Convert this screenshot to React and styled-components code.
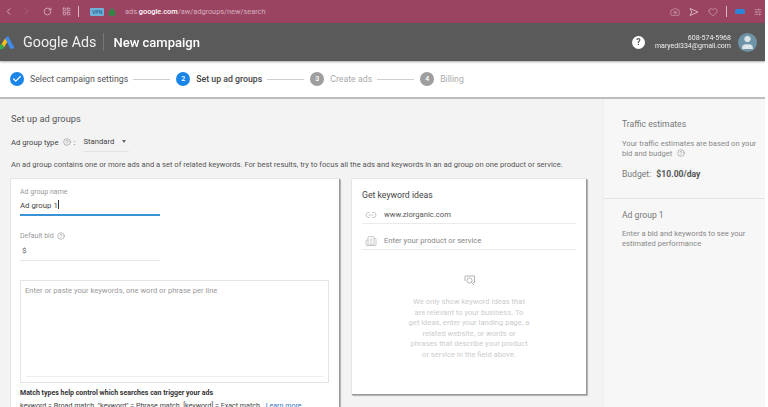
import React from 'react';
import styled, { createGlobalStyle } from 'styled-components';
import { Camera, Heart, RotateCw, ChevronLeft, ChevronRight, LayoutGrid, Lock, Link2, Building2, CircleHelp, Check, User, SlidersHorizontal } from 'lucide-react';

const Global = createGlobalStyle`
  html, body { margin: 0; padding: 0; background: #fff; overflow: hidden; }
  body { font-family: Roboto, "Liberation Sans", sans-serif; }
`;
const Page = styled.div`width: 765px; height: 407px; overflow: hidden; display: flex; flex-direction: column; filter: blur(0.45px);`;
const BrowserBar = styled.div`height: 23px; flex: none; background: #9a4462; display: flex; align-items: center; padding: 0 3px 0 3px; color: #dcbcc8;`;
const NavIcons = styled.div`display: flex; align-items: center; gap: 7px; width: 84px;`;
const Sep = styled.span`width: 1px; height: 11px; background: #d9b8c4; margin: ${p => p.$m || '0 11px 0 0'};`;
const Vpn = styled.span`font: 700 5px "Liberation Sans", sans-serif; background: #6fb2d8; color: #2c6c9a; padding: 1px 2px; border-radius: 1px; width: 10px; text-align: center;`;
const Url = styled.span`font-size: 7.4px; margin-left: 9px; color: #d5aebd; letter-spacing: -0.03px;`;
const UrlStrong = styled.b`color: #fff; font-weight: 500;`;
const BarRight = styled.div`margin-left: auto; display: flex; align-items: center; gap: 9px;`;
const Pill = styled.span`width: 10px; height: 5px; background: #2a86d8; border-radius: 2px;`;
const SendGlyph = styled.svg`width: 10px; height: 10px; fill: none; stroke: currentColor; stroke-width: 0.9; stroke-linejoin: round;`;
const Header = styled.div`height: 38px; flex: none; background: #5a5a5a; display: flex; align-items: center; color: #fff; box-shadow: 0 1px 2px rgba(0,0,0,.35); position: relative; z-index: 2; overflow: hidden;`;
const Logo = styled.svg`width: 16px; height: 15px; margin-left: -1px; flex: none;`;
const Brand = styled.span`font-size: 14.3px; color: #eee; margin-left: 8px;`;
const HeadSep = styled.span`width: 1px; height: 18px; background: #777; margin: 0 9px 0 7px;`;
const Title = styled.span`font-size: 13px; font-weight: 500;`;
const HeaderRight = styled.div`margin-left: auto; display: flex; align-items: center; padding-right: 8px;`;
const Account = styled.div`font-size: 7px; line-height: 8.5px; text-align: right; margin: 0 7px 0 10px; color: #eee;`;
const HelpDot = styled.span`width: 13px; height: 13px; background: #fff; border-radius: 50%; color: #555; font: 700 9px/13px Roboto, sans-serif; text-align: center;`;
const Avatar = styled.span`width: 19px; height: 19px; border-radius: 50%; background: #6e93a6; display: flex; align-items: center; justify-content: center; color: #dfe6ea; overflow: hidden;`;
const Stepper = styled.div`height: 36px; flex: none; background: #fff; display: flex; align-items: center; padding: 0 0 0 10px; border-bottom: 2px solid #bdbdbd;`;
const StepDot = styled.span`width: 14px; height: 14px; border-radius: 50%; flex: none; background: ${p => p.$on ? '#1a85e8' : '#9e9e9e'}; color: #fff; font: 500 7px/14px Roboto, sans-serif; text-align: center; display: flex; align-items: center; justify-content: center;`;
const StepLabel = styled.span`font-size: 8.75px; margin-left: 6px; white-space: nowrap; color: ${p => p.$c || '#555'}; font-weight: ${p => p.$b ? 500 : 400};`;
const StepLine = styled.span`height: 1px; width: ${p => p.$w}px; background: #cfcfcf; margin: 0 6px 0 5px;`;
const Body = styled.div`flex: 1; display: flex; background: #f3f3f3; min-height: 0;`;
const Main = styled.div`width: 603px; flex: none; padding: 14px 0 0 11px; box-sizing: border-box;`;
const H1 = styled.div`font-size: 9.3px; color: #555; line-height: 12px;`;
const TypeRow = styled.div`display: flex; align-items: center; font-size: 7.7px; color: #444; margin-top: 7px; height: 20px;`;
const HelpIcon = styled(CircleHelp)`color: #777; margin: ${p => p.$m || '0 0 0 4px'};`;
const Select = styled.span`margin-left: 8px; border-bottom: 1px solid #e3e3e3; display: flex; align-items: center; gap: 8px; width: 46px; height: 20px; line-height: 20px; box-sizing: border-box;`;
const Caret = styled.span`width: 0; height: 0; border: 2.5px solid transparent; border-top: 3px solid #666; border-bottom: 0;`;
const Intro = styled.div`font-size: 7.6px; color: #555; margin-top: 8px; line-height: 10px; white-space: nowrap;`;
const Cols = styled.div`display: flex; align-items: flex-start; margin-top: 9px;`;
const Card = styled.div`background: #fff; border-right: 1px solid #999; border-bottom: 1px solid #999; box-shadow: 0 0 1px rgba(0,0,0,.35), 1px 1px 1px rgba(0,0,0,.2); box-sizing: border-box;`;
const LeftCard = styled(Card)`width: 329px; height: 240px; padding: 8px 9px; margin: 0 12px 0 0;`;
const RightCard = styled(Card)`width: 235px; height: 216px; padding: 11px 10px 9px;`;
const FieldLabel = styled.div`font-size: 7px; color: #999; line-height: 10px; display: flex; align-items: center; margin-top: ${p => p.$mt || 0}px;`;
const NameInput = styled.div`width: 140px; height: 13px; margin-top: 2px; font-size: 7.8px; line-height: 13px; color: #444; border-bottom: 2px solid #3a93d6; padding-bottom: 2px;`;
const Cursor = styled.span`display: inline-block; width: 1px; height: 9px; background: #333; vertical-align: -1px;`;
const BidInput = styled.div`width: 138px; margin-top: 4px; font-size: 8px; line-height: 12px; color: #666; border-bottom: 1px solid #e6e6e6; padding: 0 0 3px 2px;`;
const Keywords = styled.div`height: 103px; margin-top: 19px; border: 1px solid #e4e4e4; box-sizing: border-box; padding: 5px 4px; font-size: 7.6px; color: #9a9a9a; line-height: 10px; position: relative; width: 309px;`;
const KwLine = styled.span`position: absolute; left: 5px; right: 5px; bottom: 5px; height: 1px; background: #eee;`;
const MatchTitle = styled.div`font-size: 7px; font-weight: 700; color: #333; margin-top: 5px; line-height: 10px;`;
const MatchText = styled.div`font-size: 7.1px; color: #444; margin-top: 3px; line-height: 10px; white-space: nowrap;`;
const LearnMore = styled.span`color: #3b78c4; margin-left: 4px;`;
const RightTitle = styled.div`font-size: 8.7px; color: #444; line-height: 11px;`;
const IdeaRow = styled.div`display: flex; align-items: flex-end; height: ${p => p.$h}px; padding-bottom: 3px; border-bottom: 1px solid #eaeaea; font-size: 7.65px; line-height: 10px; color: ${p => p.$c}; gap: 6px; box-sizing: border-box;`;
const IdeaIcon = styled.span`width: 14px; height: 12px; margin-left: 2px; color: #aaa; display: flex; justify-content: center; align-items: center; margin-bottom: -1px;`;
const Empty = styled.div`display: flex; flex-direction: column; align-items: center; margin-top: 24px; color: #ccc; text-align: center; font-size: 7.6px; line-height: 10.6px;`;
const EmptyIcon = styled.svg`width: 13px; height: 12px; fill: none; stroke: #aaa; stroke-width: 0.9;`;
const EmptyText = styled.div`margin-top: 11px; white-space: nowrap;`;
const Side = styled.div`flex: 1; background: #f7f7f7; border-left: 1px solid #ededed;`;
const SideSection = styled.div`padding: ${p => p.$p}; border-bottom: ${p => p.$b ? '1px solid #e4e4e4' : 0};`;
const SideTitle = styled.div`font-size: 8.6px; color: #777; line-height: 11px;`;
const SideText = styled.div`font-size: 7.6px; color: #888; line-height: 10.4px; margin-top: ${p => p.$mt}px;`;
const Budget = styled.div`font-size: 8.6px; color: #777; margin-top: 9px; line-height: 11px;`;
const BudgetValue = styled.b`color: #555; font-weight: 700; margin-left: 3px;`;

const Q = ({ s = 8, m }) => <HelpIcon size={s} strokeWidth={1.4} $m={m} />;

export default function App() {
  return (
    <Page>
      <Global />
      <BrowserBar>
        <NavIcons>
          <ChevronLeft size={11} strokeWidth={1.6} color="#e6ccd6" />
          <ChevronRight size={11} strokeWidth={1.4} color="#b47c92" />
          <RotateCw size={9} strokeWidth={1.8} color="#e6ccd6" style={{ marginLeft: 4 }} />
          <LayoutGrid size={9} strokeWidth={1.6} color="#e6ccd6" style={{ marginLeft: 3 }} />
        </NavIcons>
        <Sep $m="0 11px 0 -9px" />
        <Vpn>VPN</Vpn>
        <Lock size={8} color="#2f8a45" fill="#2f8a45" style={{ marginLeft: 4 }} />
        <Url>ads.<UrlStrong>google.com</UrlStrong>/aw/adgroups/new/search</Url>
        <BarRight>
          <Camera size={10} strokeWidth={1.3} />
          <SendGlyph viewBox="0 0 10 10"><path d="M1 1.5 L9 5 L1 8.5 L2.8 5Z" /></SendGlyph>
          <Heart size={10} strokeWidth={1.3} />
          <Sep $m="0 -1px" />
          <Pill />
          <SlidersHorizontal size={8} strokeWidth={1.6} />
        </BarRight>
      </BrowserBar>
      <Header>
        <Logo viewBox="0 0 16 15">
          <path d="M9 1 L15.5 13 L11.5 14 L6 3.5Z" fill="#3f8cf0" />
          <path d="M6 3.5 L2 10 L5 12.5 L8.2 7Z" fill="#f4bf1d" />
          <circle cx="2.5" cy="12" r="2.4" fill="#34a853" />
        </Logo>
        <Brand>Google Ads</Brand>
        <HeadSep />
        <Title>New campaign</Title>
        <HeaderRight>
          <HelpDot>?</HelpDot>
          <Account>608-574-5968<br />maryedi334@gmail.com</Account>
          <Avatar><User size={17} fill="#dfe6ea" strokeWidth={1} /></Avatar>
        </HeaderRight>
      </Header>
      <Stepper>
        <StepDot $on><Check size={10} strokeWidth={3} /></StepDot>
        <StepLabel>Select campaign settings</StepLabel>
        <StepLine $w={37} />
        <StepDot $on>2</StepDot>
        <StepLabel $b $c="#444">Set up ad groups</StepLabel>
        <StepLine $w={37} />
        <StepDot>3</StepDot>
        <StepLabel $c="#aaa">Create ads</StepLabel>
        <StepLine $w={37} />
        <StepDot>4</StepDot>
        <StepLabel $c="#aaa">Billing</StepLabel>
      </Stepper>
      <Body>
        <Main>
          <H1>Set up ad groups</H1>
          <TypeRow>
            Ad group type <Q m="0 3px 0 4px" /> :
            <Select>Standard <Caret /></Select>
          </TypeRow>
          <Intro>An ad group contains one or more ads and a set of related keywords. For best results, try to focus all the ads and keywords in an ad group on one product or service.</Intro>
          <Cols>
            <LeftCard>
              <FieldLabel>Ad group name</FieldLabel>
              <NameInput>Ad group 1<Cursor /></NameInput>
              <FieldLabel $mt={15}>Default bid <Q m="0 0 0 3px" /></FieldLabel>
              <BidInput>$</BidInput>
              <Keywords>Enter or paste your keywords, one word or phrase per line<KwLine /></Keywords>
              <MatchTitle>Match types help control which searches can trigger your ads</MatchTitle>
              <MatchText>keyword = Broad match &nbsp;"keyword" = Phrase match &nbsp;[keyword] = Exact match <LearnMore>Learn more</LearnMore></MatchText>
            </LeftCard>
            <RightCard>
              <RightTitle>Get keyword ideas</RightTitle>
              <IdeaRow $h={23} $c="#555"><IdeaIcon><Link2 size={12} strokeWidth={1.3} /></IdeaIcon>www.ziorganic.com</IdeaRow>
              <IdeaRow $h={26} $c="#888"><IdeaIcon><Building2 size={12} strokeWidth={1.2} /></IdeaIcon>Enter your product or service</IdeaRow>
              <Empty>
                <EmptyIcon viewBox="0 0 13 12">
                  <path d="M2 7 V2 H11.5 V8.5 H10" />
                  <circle cx="6.5" cy="6.5" r="2.6" />
                  <path d="M8.4 8.4 L11 11" />
                </EmptyIcon>
                <EmptyText>
                  We only show keyword ideas that<br />
                  are relevant to your business. To<br />
                  get ideas, enter your landing page, a<br />
                  related website, or words or<br />
                  phrases that describe your product<br />
                  or service in the field above.
                </EmptyText>
              </Empty>
            </RightCard>
          </Cols>
        </Main>
        <Side>
          <SideSection $p="20px 8px 18px 18px" $b>
            <SideTitle>Traffic estimates</SideTitle>
            <SideText $mt={9}>Your traffic estimates are based on your bid and budget <Q m="0 0 -1px 3px" /></SideText>
            <Budget>Budget: <BudgetValue>$10.00/day</BudgetValue></Budget>
          </SideSection>
          <SideSection $p="11px 8px 0 18px">
            <SideTitle>Ad group 1</SideTitle>
            <SideText $mt={8}>Enter a bid and keywords to see your estimated performance</SideText>
          </SideSection>
        </Side>
      </Body>
    </Page>
  );
}
